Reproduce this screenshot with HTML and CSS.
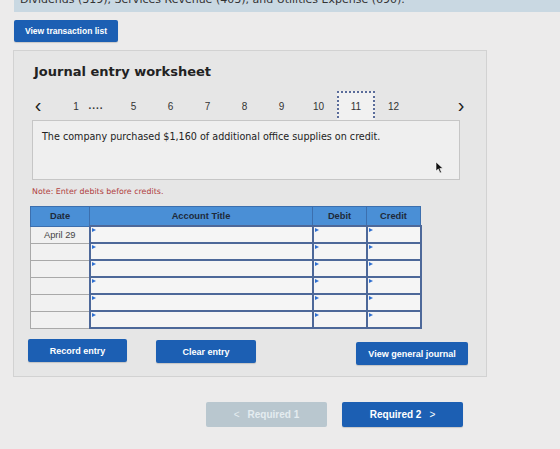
FILE: index.html
```html
<!DOCTYPE html>
<html>
<head>
<meta charset="utf-8">
<link rel="stylesheet" href="styles.css">
</head>
<body>
<div class="band"><p>Dividends (319), Services Revenue (403), and Utilities Expense (690).</p></div>
<div class="page">
  <button class="btn btn-list">View transaction list</button>
  <section class="panel">
    <h2 class="title">Journal entry worksheet</h2>
    <nav class="steps">
      <span class="chev">&#8249;</span>
      <span class="step s1">1</span>
      <span class="dots">....</span>
      <span class="step s5">5</span>
      <span class="step">6</span>
      <span class="step">7</span>
      <span class="step">8</span>
      <span class="step">9</span>
      <span class="step">10</span>
      <span class="step current">11</span>
      <span class="step">12</span>
      <span class="chev next">&#8250;</span>
    </nav>
    <div class="desc">
      <p>The company purchased $1,160 of additional office supplies on credit.</p>
      <svg class="cursor" width="9" height="13" viewBox="0 0 9 13"><path d="M1 1 L1 10 L3.3 8 L5 12 L6.5 11.3 L4.8 7.5 L8 7.5 Z" fill="#111" stroke="#fff" stroke-width="0.6"/></svg>
    </div>
    <p class="note">Note: Enter debits before credits.</p>
    <table class="journal">
      <thead>
        <tr><th class="c-date">Date</th><th class="c-acct">Account Title</th><th class="c-amt">Debit</th><th class="c-cr">Credit</th></tr>
      </thead>
      <tbody>
        <tr><td class="date">April 29</td><td class="inp"></td><td class="inp"></td><td class="inp"></td></tr>
        <tr><td class="date"></td><td class="inp"></td><td class="inp"></td><td class="inp"></td></tr>
        <tr><td class="date"></td><td class="inp"></td><td class="inp"></td><td class="inp"></td></tr>
        <tr><td class="date"></td><td class="inp"></td><td class="inp"></td><td class="inp"></td></tr>
        <tr><td class="date"></td><td class="inp"></td><td class="inp"></td><td class="inp"></td></tr>
        <tr><td class="date"></td><td class="inp"></td><td class="inp"></td><td class="inp"></td></tr>
      </tbody>
    </table>
    <div class="actions">
      <button class="btn btn-record">Record entry</button>
      <button class="btn btn-clear">Clear entry</button>
      <button class="btn btn-journal">View general journal</button>
    </div>
  </section>
  <div class="pager">
    <button class="btn btn-req disabled"><span class="arr">&lt;</span> Required 1</button>
    <button class="btn btn-req">Required 2 <span class="arr">&gt;</span></button>
  </div>
</div>
</body>
</html>
```
FILE: styles.css
```css
html, body {
  margin: 0;
  padding: 0;
}
body {
  background: #ecebeb;
  width: 560px;
  height: 449px;
  overflow: hidden;
  font-family: "DejaVu Sans", Verdana, sans-serif;
  color: #222;
}

/* strip of the instructions box above, scrolled mostly out of view */
.band {
  margin-left: 14px;
  height: 12px;
  background: #c9d8e2;
  overflow: hidden;
}
.band p {
  margin: -7px 0 0 6px;
  font-size: 11px;
  line-height: 14px;
  color: #333;
  white-space: nowrap;
}

.page {
  padding-left: 13px;
}

.btn {
  display: inline-flex;
  align-items: center;
  justify-content: center;
  border: 0;
  border-radius: 2px;
  background: #1c5fb3;
  color: #fff;
  font-family: "Liberation Sans", Arial, sans-serif;
  font-weight: bold;
  font-size: 9px;
  padding: 0;
  box-shadow: 0 1px 1px rgba(0,0,0,0.15);
}

.btn-list {
  margin: 8px 0 0 1px;
  width: 104px;
  height: 22px;
  font-size: 8.5px;
}

.panel {
  margin-top: 8px;
  width: 474px;
  height: 327px;
  box-sizing: border-box;
  background: #e6e6e6;
  border: 1px solid #d2d2d2;
  padding: 0 0 0 18px;
  position: relative;
}

.title {
  margin: 13px 0 0 2px;
  font-size: 13px;
  font-weight: bold;
  line-height: 16px;
  color: #222;
}

.steps {
  display: flex;
  align-items: center;
  height: 31px;
  margin-top: 11px;
  font-family: "Liberation Sans", Arial, sans-serif;
  font-size: 10px;
  color: #333;
}
.chev {
  width: 12px;
  text-align: center;
  font-size: 20px;
  line-height: 20px;
  color: #222;
  margin-top: -3px;
}
.chev.next {
  margin-left: 43px;
}
.step {
  width: 37px;
  height: 31px;
  display: flex;
  align-items: center;
  justify-content: center;
  box-sizing: border-box;
}
.step.s1 {
  width: 24px;
  margin-left: 20px;
}
.dots {
  width: 16px;
  text-align: center;
  letter-spacing: 1px;
  font-weight: bold;
  margin-top: -3px;
}
.step.s5 {
  margin-left: 11px;
}
.step.current {
  border: 2px dotted #5a6c9a;
  background: #f1f1f1;
  width: 38px;
}

.desc {
  position: relative;
  width: 428px;
  height: 60px;
  box-sizing: border-box;
  margin-top: -2px;
  background: #efefef;
  border: 1px solid #c6c6c6;
  padding: 10px 0 0 9px;
}
.desc p {
  margin: 0;
  font-size: 9.6px;
  line-height: 12px;
  color: #222;
}
.cursor {
  position: absolute;
  left: 402px;
  top: 40px;
}

.note {
  margin: 7px 0 0 0;
  font-size: 7.9px;
  line-height: 10px;
  color: #b04040;
}

.journal {
  margin: 9px 0 0 -2px;
  border-collapse: collapse;
  table-layout: fixed;
  width: 388px;
  font-family: "Liberation Sans", Arial, sans-serif;
}
.journal th {
  height: 18px;
  padding: 0;
  background: #4a8fd6;
  border: 1px solid #3c6fae;
  font-size: 9.3px;
  font-weight: bold;
  color: #1e2a3a;
}
.c-date { width: 58px; }
.c-acct { width: 222px; }
.c-amt { width: 53px; }
.c-cr { width: 53px; }

.journal td {
  height: 15px;
  padding: 0;
}
.journal td.date {
  background: #f1f1f1;
  border: 1px solid #a9a9a9;
  text-align: center;
  font-size: 9.3px;
  color: #444;
}
.journal td.inp {
  position: relative;
  background: #f5f5f5;
  border: 2px solid #4d6899;
}
/* small marker in the corner of each entry field */
.journal td.inp::before {
  content: "";
  position: absolute;
  left: 1px;
  top: 1px;
  border-left: 4px solid #2f6fd0;
  border-top: 2.5px solid transparent;
  border-bottom: 2.5px solid transparent;
}

.actions {
  display: flex;
  align-items: flex-start;
  margin-top: 10px;
  margin-left: -4px;
}
.btn-record {
  width: 99px;
  height: 23px;
}
.btn-clear {
  width: 100px;
  height: 23px;
  margin-left: 29px;
  margin-top: 1px;
}
.btn-journal {
  width: 112px;
  height: 23px;
  margin-left: 100px;
  margin-top: 3px;
}

.pager {
  display: flex;
  margin-top: 25px;
  margin-left: 193px;
  gap: 15px;
}
.btn-req {
  width: 121px;
  height: 25px;
  font-size: 10px;
  gap: 8px;
}
.btn-req .arr {
  font-weight: normal;
  font-size: 10px;
}
.btn-req.disabled {
  background: #b9c7cf;
  color: #e4ecf0;
  box-shadow: none;
}
```
